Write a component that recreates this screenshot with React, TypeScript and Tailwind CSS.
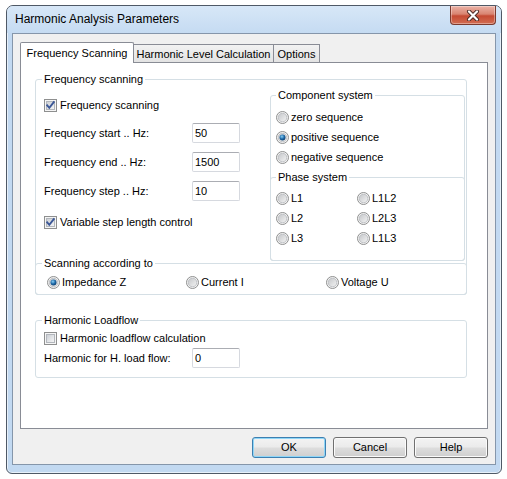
import React from 'react';

function CheckBox({ checked }: { checked: boolean }) {
  return (
    <svg width="13" height="13" viewBox="0 0 13 13" className="shrink-0">
      <defs>
        <linearGradient id="cbFill" x1="0" y1="0" x2="1" y2="1">
          <stop offset="0" stopColor="#c9cdd3" />
          <stop offset="1" stopColor="#f7f7f7" />
        </linearGradient>
      </defs>
      <rect x="0.5" y="0.5" width="12" height="12" fill="#f5f5f5" stroke="#8e8f8f" />
      <rect x="2.5" y="2.5" width="8" height="8" fill="url(#cbFill)" stroke="#b2b6bc" />
      {checked && (
        <path d="M3.2 6.4 L5.3 8.8 L9.8 3.2" fill="none" stroke="#3b5797" strokeWidth="1.9" strokeLinecap="square" />
      )}
    </svg>
  );
}

function RadioIcon({ checked }: { checked: boolean }) {
  return (
    <svg width="13" height="13" viewBox="0 0 13 13" className="shrink-0">
      <defs>
        <linearGradient id="rbFill" x1="0" y1="0" x2="1" y2="1">
          <stop offset="0" stopColor="#c4c6c9" />
          <stop offset="1" stopColor="#f4f4f4" />
        </linearGradient>
        <radialGradient id="rbDot" cx="0.4" cy="0.35" r="0.7">
          <stop offset="0" stopColor="#8ad0f6" />
          <stop offset="0.55" stopColor="#1f6aa8" />
          <stop offset="1" stopColor="#0b3a6b" />
        </radialGradient>
      </defs>
      <circle cx="6.5" cy="6.5" r="6" fill="#f4f4f4" stroke="#8e8f8f" />
      <circle cx="6.5" cy="6.5" r="4.3" fill="url(#rbFill)" stroke="#b5b8bc" strokeWidth="0.8" />
      {checked && <circle cx="6.5" cy="6.5" r="3" fill="url(#rbDot)" />}
    </svg>
  );
}

function Radio({ label, checked = false }: { label: string; checked?: boolean }) {
  return (
    <div className="flex items-center h-[20px]">
      <RadioIcon checked={checked} />
      <span className="ml-[2px] leading-[13px]">{label}</span>
    </div>
  );
}

function CheckRow({ label, checked }: { label: string; checked: boolean }) {
  return (
    <div className="flex items-center h-[20px]">
      <CheckBox checked={checked} />
      <span className="ml-[3px] leading-[13px]">{label}</span>
    </div>
  );
}

function FieldRow({ label, value, className = '' }: { label: string; value: string; className?: string }) {
  return (
    <div className={`flex items-center h-[20px] ${className}`}>
      <span className="w-[148px] leading-[13px]">{label}</span>
      <div className="w-[48px] h-[20px] flex items-center pl-[2px] bg-white border border-[#d6d9df] border-t-[#abadb3] rounded-[2px]">
        {value}
      </div>
    </div>
  );
}

export default function App() {
  const btn =
    'w-[74px] h-[21px] rounded-[3px] border text-[11px] leading-[13px] bg-[linear-gradient(to_bottom,#f3f3f3_0%,#ebebeb_48%,#dddddd_52%,#cfcfcf_100%)]';

  return (
    <div className="w-[507px] h-[479px] bg-white pt-[5px] pl-[6px] text-[11px] text-black font-['Liberation_Sans',Arial,sans-serif]">
      <div className="w-[496px] h-[469px] flex flex-col rounded-t-[7px] rounded-b-[6px] border border-[#4f5966] bg-[#c2d9f1] shadow-[inset_0_0_0_1px_rgba(255,255,255,0.6)]">
        {/* title bar */}
        <div className="h-[27px] flex items-start justify-between rounded-t-[6px] bg-[linear-gradient(to_bottom,#d7e7f7,#c5dbf2)]">
          <span className="pl-[8px] pt-[6px] text-[12px] leading-[15px]">Harmonic Analysis Parameters</span>
          <div className="mr-[5px] w-[46px] h-[19px] flex items-center justify-center rounded-b-[4px] border border-t-0 border-[#7b3a2e] bg-[linear-gradient(to_bottom,#ebb3a7_0%,#d98471_45%,#c54a33_55%,#d26d52_100%)] shadow-[inset_0_0_0_1px_rgba(255,255,255,0.35)]">
            <svg width="14" height="11" viewBox="0 0 14 11">
              <path d="M3 1.5 L11 9.5 M11 1.5 L3 9.5" stroke="#4a2a25" strokeWidth="4" strokeLinecap="round" />
              <path d="M3 1.5 L11 9.5 M11 1.5 L3 9.5" stroke="#ffffff" strokeWidth="2.2" strokeLinecap="round" />
            </svg>
          </div>
        </div>

        {/* client area */}
        <div className="mx-[5px] h-[432px] border border-[#8596aa] bg-[#f0f0f0] flex flex-col pt-[8px] px-[7px]">
          {/* tabs */}
          <div className="flex items-end h-[20px] relative z-10">
            <div className="w-[114px] h-[21px] -mb-px flex items-center justify-center bg-white border border-b-0 border-[#898c95] rounded-t-[2px]">
              Frequency Scanning
            </div>
            <div className="w-[141px] h-[18px] -ml-px flex items-center justify-center pt-[1px] border border-b-0 border-[#898c95] bg-[linear-gradient(to_bottom,#f2f2f2,#e3e3e3)]">
              Harmonic Level Calculation
            </div>
            <div className="w-[47px] h-[18px] -ml-px flex items-center justify-center pt-[1px] border border-b-0 border-[#898c95] bg-[linear-gradient(to_bottom,#f2f2f2,#e3e3e3)]">
              Options
            </div>
          </div>

          {/* tab page */}
          <div className="h-[367px] bg-white border border-[#898c95]">
            {/* Frequency scanning group */}
            <fieldset className="mt-[10px] ml-[14px] mr-[20px] border border-[#d5dfe5] rounded-[3px]">
              <legend className="ml-[6px] px-[2px] leading-[13px]">Frequency scanning</legend>
              <div className="flex">
                <div className="w-[234px] pl-[8px] pt-[9px]">
                  <CheckRow label="Frequency scanning" checked />
                  <FieldRow className="mt-[8px]" label="Frequency start .. Hz:" value="50" />
                  <FieldRow className="mt-[9px]" label="Frequency end .. Hz:" value="1500" />
                  <FieldRow className="mt-[9px]" label="Frequency step .. Hz:" value="10" />
                  <div className="mt-[11px]">
                    <CheckRow label="Variable step length control" checked />
                  </div>
                </div>

                <fieldset className="flex-1 mt-[3px] mr-[1px] border border-[#d5dfe5] rounded-[3px]">
                  <legend className="ml-[5px] px-[2px] leading-[13px]">Component system</legend>
                  <div className="mt-[5px] pl-[5px]">
                    <Radio label="zero sequence" />
                    <Radio label="positive sequence" checked />
                    <Radio label="negative sequence" />
                  </div>
                  <fieldset className="mt-[4px] -mx-px -mb-px pb-[12px] border border-[#d5dfe5] rounded-[3px]">
                    <legend className="ml-[5px] px-[2px] leading-[13px]">Phase system</legend>
                    <div className="mt-[4px] pl-[5px] grid grid-cols-[81px_1fr]">
                      <Radio label="L1" />
                      <Radio label="L1L2" />
                      <Radio label="L2" />
                      <Radio label="L2L3" />
                      <Radio label="L3" />
                      <Radio label="L1L3" />
                    </div>
                  </fieldset>
                </fieldset>
              </div>

              {/* Scanning according to */}
              <fieldset className="mt-[-4px] -mx-px -mb-px pb-[2px] border border-[#d5dfe5] rounded-[3px]">
                <legend className="ml-[6px] px-[2px] leading-[13px]">Scanning according to</legend>
                <div className="mt-[2px] pl-[11px] grid grid-cols-[139px_140px_1fr]">
                  <Radio label="Impedance Z" checked />
                  <Radio label="Current I" />
                  <Radio label="Voltage U" />
                </div>
              </fieldset>
            </fieldset>

            {/* Harmonic Loadflow group */}
            <fieldset className="mt-[19px] ml-[14px] mr-[20px] pb-[9px] border border-[#d5dfe5] rounded-[3px]">
              <legend className="ml-[6px] px-[2px] leading-[13px]">Harmonic Loadflow</legend>
              <div className="pl-[8px] mt-[1px]">
                <CheckRow label="Harmonic loadflow calculation" checked={false} />
                <FieldRow label="Harmonic for H. load flow:" value="0" />
              </div>
            </fieldset>
          </div>

          {/* buttons */}
          <div className="mt-[8px] flex justify-end gap-[7px]">
            <button className={`${btn} border-[#3c7fb1] shadow-[inset_0_0_0_1px_#8fd6f7]`}>OK</button>
            <button className={`${btn} border-[#707070] shadow-[inset_0_0_0_1px_#fbfbfb]`}>Cancel</button>
            <button className={`${btn} border-[#707070] shadow-[inset_0_0_0_1px_#fbfbfb]`}>Help</button>
          </div>
        </div>
      </div>
    </div>
  );
}
